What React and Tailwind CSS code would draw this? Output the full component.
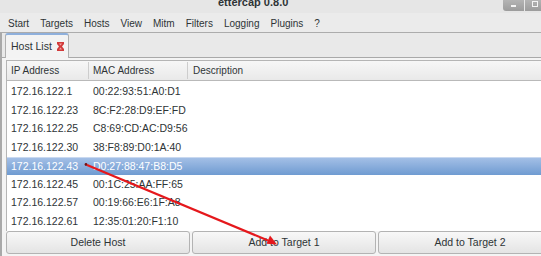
import React from "react";

const hosts = [
  { ip: "172.16.122.1", mac: "00:22:93:51:A0:D1" },
  { ip: "172.16.122.23", mac: "8C:F2:28:D9:EF:FD" },
  { ip: "172.16.122.25", mac: "C8:69:CD:AC:D9:56" },
  { ip: "172.16.122.30", mac: "38:F8:89:D0:1A:40" },
  { ip: "172.16.122.43", mac: "D0:27:88:47:B8:D5", selected: true },
  { ip: "172.16.122.45", mac: "00:1C:25:AA:FF:65" },
  { ip: "172.16.122.57", mac: "00:19:66:E6:1F:A8" },
  { ip: "172.16.122.61", mac: "12:35:01:20:F1:10" },
];

const menus = ["Start", "Targets", "Hosts", "View", "Mitm", "Filters", "Logging", "Plugins", "?"];

// little red close icon on the notebook tab
const TabClose = () => (
  <svg width="7" height="9" viewBox="0 0 7 9" className="ml-[5px]">
    <path d="M0 0 H7 V2 L5 4.5 L7 7 V9 H0 V7 L2 4.5 L0 2 Z" fill="#d23a3a" />
    <path d="M2 1.5 H5 L3.5 3.5 Z M2 7.5 H5 L3.5 5.5 Z" fill="#f3a3a3" />
  </svg>
);

const App = () => {
  return (
    <div className="relative w-[541px] h-[256px] overflow-hidden bg-[#ededed] font-['Liberation_Sans',Arial,sans-serif] text-[#2e3436]">
      <div className="w-[562px]">
        {/* Title bar */}
        <div className="flex h-[13px] bg-[#e6e6e6]">
          <div className="pl-[218px] -mt-[3px] text-[11px] leading-[11px] font-bold text-[#2e3436]">
            ettercap 0.8.0
          </div>
          <div className="flex ml-[215px] h-[11px] gap-[1px]">
            <div className="w-[21px] h-[11px] rounded-bl-[3px] bg-gradient-to-b from-[#b4b4b4] to-[#9c9c9c] flex justify-center">
              <div className="w-[5px] h-[2px] bg-[#f4f4f4] mt-[5px]" />
            </div>
            <div className="w-[21px] h-[11px] bg-gradient-to-b from-[#b4b4b4] to-[#9c9c9c] flex pl-[7px]">
              <div className="w-[6px] h-[6px] border border-[#f4f4f4] mt-[1px]" />
            </div>
          </div>
        </div>

        {/* Menu bar */}
        <div className="flex h-[20px] pl-[8px] gap-[11px] text-[10px] leading-[20px] pt-[1px] bg-[#ebebeb] border-b border-[#acacac]">
          {menus.map((m) => (
            <span key={m}>{m}</span>
          ))}
        </div>

        {/* Notebook tabs */}
        <div className="flex h-[24px] pl-[3px] bg-[#e9e9e9] border-l-2 border-[#a9a9a9]">
          <div className="relative z-10 flex items-center w-[64px] h-[25px] pl-[5px] bg-[#f3f3f3] border border-b-0 border-[#b0b0b0] rounded-t-[3px] border-t-2 border-t-[#8fb0dc] text-[10.5px]">
            Host List
            <TabClose />
          </div>
        </div>

        {/* Notebook page */}
        <div className="border-t border-l-2 border-[#a9a9a9] bg-[#f4f4f4] pl-[4px] pt-[2px]">
          <div className="border-l border-t border-[#b5b5b5] bg-white">
            {/* Column header */}
            <div className="flex h-[20px] items-center text-[10px] bg-gradient-to-b from-[#f7f7f7] to-[#e9e9e9] border-b border-[#b9b9b9]">
              <div className="w-[81px] pl-[4px]">IP Address</div>
              <div className="w-[99px] h-[17px] flex items-center pl-[4px] border-l border-[#cdcdcd]">MAC Address</div>
              <div className="flex-1 h-[17px] flex items-center pl-[5px] border-l border-[#cdcdcd]">Description</div>
            </div>

            {/* Host rows */}
            <div className="h-[150px] pt-[1.5px] text-[10.5px]">
              {hosts.map((h) => (
                <div
                  key={h.ip}
                  className={`flex h-[18.6px] items-center ${
                    h.selected
                      ? "bg-gradient-to-b from-[#a3bfe6] to-[#6f9bd1] text-white border-t border-[#c9d9f0]"
                      : ""
                  }`}
                >
                  <div className="w-[81px] pl-[4px]">{h.ip}</div>
                  <div className="pl-[5px]">{h.mac}</div>
                </div>
              ))}
            </div>
          </div>

          {/* Buttons */}
          <div className="flex gap-[2px] h-[23px] text-[10.5px]">
            <button className="flex-1 rounded-[3px] border border-[#b3b3b3] bg-gradient-to-b from-[#f8f8f8] to-[#e4e4e4]">
              Delete Host
            </button>
            <button className="flex-1 rounded-[3px] border border-[#b3b3b3] bg-gradient-to-b from-[#f8f8f8] to-[#e4e4e4]">
              Add to Target 1
            </button>
            <button className="flex-1 rounded-[3px] border border-[#b3b3b3] bg-gradient-to-b from-[#f8f8f8] to-[#e4e4e4]">
              Add to Target 2
            </button>
          </div>
          <div className="h-[4px]" />
        </div>
      </div>

      {/* Red annotation arrow */}
      <svg className="absolute left-0 top-0 pointer-events-none" width="541" height="256">
        <circle cx="86" cy="164.5" r="1.4" fill="#7a1010" />
        <line x1="87" y1="165" x2="268" y2="240.5" stroke="#e5181c" strokeWidth="2.2" />
        <polygon points="277,244.5 266.5,243.8 270,235.5" fill="#e5181c" />
      </svg>
    </div>
  );
};

export default App;
